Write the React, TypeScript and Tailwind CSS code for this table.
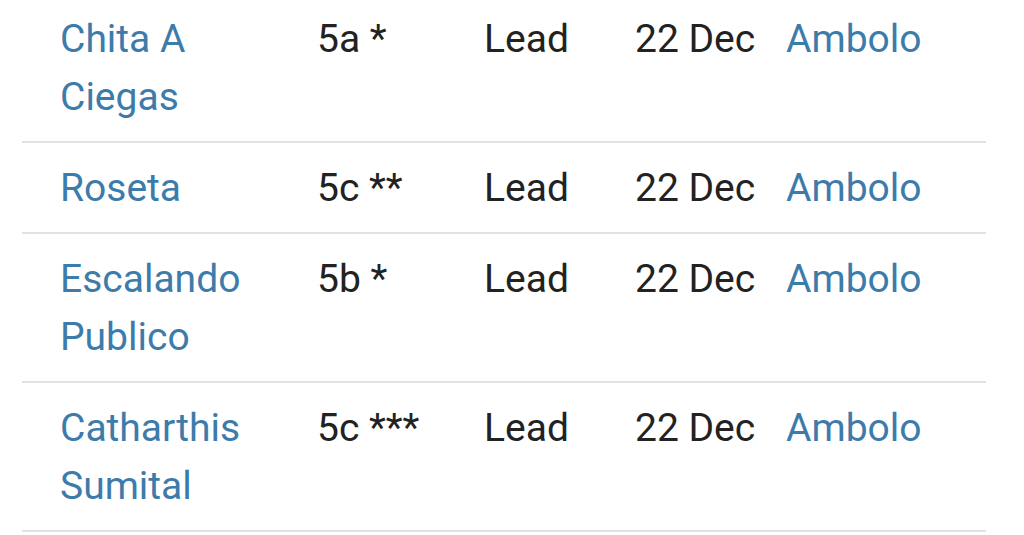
import React from 'react';

interface Route {
  name: string[];
  grade: string;
  style: string;
  date: string;
  crag: string;
}

const routes: Route[] = [
  { name: ['Chita A', 'Ciegas'], grade: '5a *', style: 'Lead', date: '22 Dec', crag: 'Ambolo' },
  { name: ['Roseta'], grade: '5c **', style: 'Lead', date: '22 Dec', crag: 'Ambolo' },
  { name: ['Escalando', 'Publico'], grade: '5b *', style: 'Lead', date: '22 Dec', crag: 'Ambolo' },
  { name: ['Catharthis', 'Sumital'], grade: '5c ***', style: 'Lead', date: '22 Dec', crag: 'Ambolo' },
];

export default function App() {
  return (
    <div className="h-[535px] overflow-hidden bg-white px-[22px] font-['Roboto',sans-serif] text-[39px] leading-[58px] text-[#222]">
      <div className="-mt-[6px] w-[964px]">
        {routes.map((r, i) => (
          <div
            key={i}
            className="grid grid-cols-[283px_167px_151px_151px_1fr] border-b-2 border-[#e2e2e2] py-[15.5px]"
          >
            <div className="pl-[38px] text-[#3d7bab]">
              {r.name.map((line, j) => (
                <div key={j}>{line}</div>
              ))}
            </div>
            <div className="pl-[12px]">{r.grade}</div>
            <div className="pl-[12px]">{r.style}</div>
            <div className="pl-[12px]">{r.date}</div>
            <div className="pl-[12px] text-[#3d7bab]">{r.crag}</div>
          </div>
        ))}
      </div>
    </div>
  );
}
